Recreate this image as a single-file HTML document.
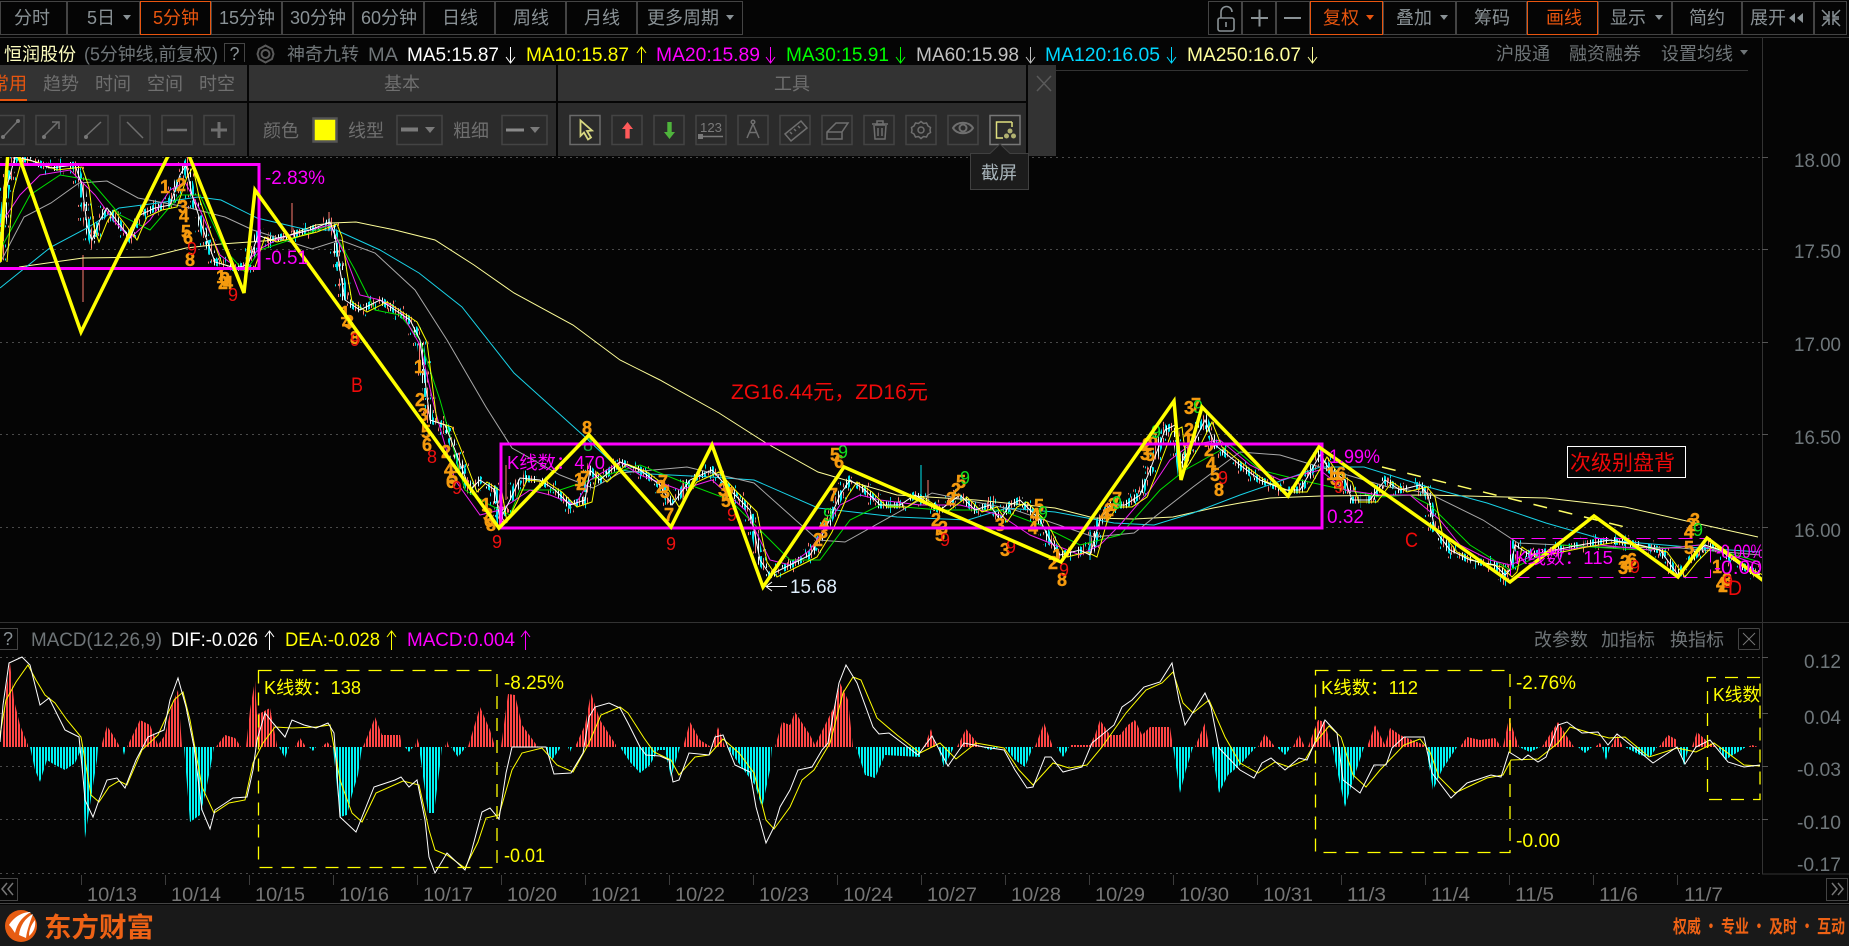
<!DOCTYPE html>
<html lang="zh"><head><meta charset="utf-8"><title>恒润股份</title>
<style>
html,body{margin:0;padding:0;background:#050505;width:1849px;height:946px;overflow:hidden}
svg{display:block}
text{font-family:"Liberation Sans","Noto Sans CJK SC",sans-serif;white-space:pre}
.c{font-family:"Liberation Sans","Noto Sans CJK SC",sans-serif;font-size:18px}
.m{text-anchor:middle}
.g{fill:#8a9296}.d{fill:#6f7578}.p{fill:#707070}
.ax{font-size:19px;fill:#6f777b;text-anchor:end}
.dt{font-size:19px;fill:#767676}
.td{font-size:18px;fill:#f59a0e;font-weight:700;stroke:#f59a0e;stroke-width:.4}.r9{font-size:18px;fill:#f01010}.g9{font-size:18px;fill:#10e020}
.dot{stroke:#4a4a4a;stroke-width:1;stroke-dasharray:2 4;fill:none}
.b{fill:none;stroke:#444}.o{fill:none;stroke:#e8550f}
.ib{fill:none;stroke:#444;stroke-width:1.5}
.ic{fill:none;stroke:#6f6f6f;stroke-width:1.5}
polyline{fill:none}
</style></head><body>
<svg xmlns="http://www.w3.org/2000/svg" width="1849" height="946" viewBox="0 0 1849 946">
<defs>
<pattern id="rd" width="3" height="10" patternUnits="userSpaceOnUse"><rect width="2" height="10" fill="#ff4545"/></pattern>
<pattern id="cy" width="3" height="10" patternUnits="userSpaceOnUse"><rect width="2" height="10" fill="#00f2f2"/></pattern>
<pattern id="cd" width="8" height="10" patternUnits="userSpaceOnUse"><rect width="2" height="10" fill="#00e8ee"/><rect x="3" width="1" height="10" fill="#ff7a70"/><rect x="6" width="1" height="10" fill="#e8ffff"/></pattern>
<pattern id="ce" width="5" height="10" patternUnits="userSpaceOnUse"><rect width="1" height="10" fill="#00e8ee"/><rect x="3" width="1" height="10" fill="#ff7a70"/></pattern>
<clipPath id="cm"><rect x="0" y="157" width="1762" height="465"/></clipPath>
<clipPath id="cb"><rect x="0" y="650" width="1761" height="224"/></clipPath>
<polyline id="px" points="0,260 6,190 15,157 30,160 50,168 75,165 82,185 87,225 92,240 100,220 107,208 120,225 130,238 140,215 155,208 170,205 180,175 186,165 192,195 205,235 215,262 235,268 248,265 258,235 270,240 290,235 310,230 330,222 335,235 340,270 345,300 360,310 380,300 395,310 410,320 420,340 425,380 430,420 445,425 455,450 470,490 480,480 495,490 500,520 510,500 520,478 540,480 555,490 570,505 585,500 590,470 600,480 620,462 640,470 660,485 672,505 690,480 712,470 730,490 750,510 760,560 770,575 790,565 810,555 825,530 840,495 850,480 865,490 880,505 900,505 915,495 940,510 960,495 975,510 990,505 1000,520 1010,505 1020,500 1040,520 1050,540 1060,555 1080,550 1090,555 1100,520 1110,505 1125,505 1140,495 1150,470 1165,430 1175,425 1180,465 1195,440 1205,420 1215,445 1240,465 1260,480 1285,490 1300,490 1320,455 1330,470 1345,480 1352,500 1370,500 1385,480 1400,490 1420,485 1428,495 1435,530 1450,550 1470,560 1495,565 1505,575 1510,570 1515,545 1530,555 1580,545 1610,540 1640,545 1660,550 1678,575 1690,560 1705,545 1720,550 1740,565 1760,575"/>
</defs>
<rect width="1849" height="946" fill="#050505"/>

<!-- top toolbar -->
<g stroke-width="1">
<rect class="b" x="0.5" y="1.5" width="66" height="33"/><rect class="b" x="67.5" y="1.5" width="72" height="33"/>
<rect class="b" x="211.5" y="1.5" width="70" height="33"/><rect class="b" x="282.5" y="1.5" width="70" height="33"/><rect class="b" x="353.5" y="1.5" width="70" height="33"/><rect class="b" x="424.5" y="1.5" width="70" height="33"/><rect class="b" x="495.5" y="1.5" width="70" height="33"/><rect class="b" x="566.5" y="1.5" width="70" height="33"/><rect class="b" x="637.5" y="1.5" width="105" height="33"/>
<rect class="o" x="140.5" y="1.5" width="70" height="33"/>
<rect class="b" x="1208.5" y="1.5" width="33" height="33"/><rect class="b" x="1242.5" y="1.5" width="33" height="33"/><rect class="b" x="1276.5" y="1.5" width="33" height="33"/>
<rect class="b" x="1383.5" y="1.5" width="72" height="33"/><rect class="b" x="1456.5" y="1.5" width="70" height="33"/><rect class="b" x="1598.5" y="1.5" width="73" height="33"/><rect class="b" x="1672.5" y="1.5" width="69" height="33"/><rect class="b" x="1742.5" y="1.5" width="71" height="33"/><rect class="b" x="1814.5" y="1.5" width="32" height="33"/>
<rect class="o" x="1310.5" y="1.5" width="72" height="33"/><rect class="o" x="1527.5" y="1.5" width="70" height="33"/>
</g>
<g class="c m g">
<text x="32" y="24" class="m">分时</text><text x="101" y="24" class="m">5日</text>
<text x="176" y="24" class="m" style="fill:#e8550f">5分钟</text>
<text x="247" y="24" class="m">15分钟</text><text x="318" y="24" class="m">30分钟</text><text x="389" y="24" class="m">60分钟</text>
<text x="460" y="24" class="m">日线</text><text x="531" y="24" class="m">周线</text><text x="602" y="24" class="m">月线</text><text x="683" y="24" class="m">更多周期</text>
<text x="1341" y="24" class="m" style="fill:#e8550f">复权</text><text x="1414" y="24" class="m">叠加</text><text x="1492" y="24" class="m">筹码</text>
<text x="1564" y="24" class="m" style="fill:#e8550f">画线</text><text x="1628" y="24" class="m">显示</text><text x="1707" y="24" class="m">简约</text><text x="1768" y="24" class="m">展开</text>
</g>
<g fill="#8a9296">
<path d="M123 15h8l-4 5zM726 15h8l-4 5zM1440 15h8l-4 5zM1655 15h8l-4 5z"/>
<path d="M1366 15h8l-4 5z" fill="#e8550f"/>
<path d="M1795 13v10l-6-5zM1803 13v10l-6-5z"/>
</g>
<g fill="none" stroke="#8a9296" stroke-width="1.6">
<rect x="1218" y="18" width="16" height="13" rx="2"/><path d="M1221 18v-6a5.500 5.500 0 0 1 11 0"/><path d="M1226 22v5"/>
</g>
<path d="M1251 18h17M1259.500 9.500v17" stroke="#8a9296" stroke-width="2"/><path d="M1284 18h17" stroke="#8a9296" stroke-width="2"/>
<path d="M1829 11v6h-6M1833 11v6h6M1829 25v-6h-6M1833 25v-6h6M1822 10l6 6M1840 10l-6 6M1822 26l6-6M1840 26l-6-6" stroke="#8a9296" fill="none" stroke-width="1.500"/>
<path d="M0 37.500H1849" stroke="#333"/>

<!-- info row -->
<text x="4" y="60.500" class="c" style="fill:#ffffc0">恒润股份</text>
<text x="84" y="60.500" class="c d" textLength="134" lengthAdjust="spacingAndGlyphs">(5分钟线,前复权)</text>
<path d="M224.500 62V43.500h20V62" class="b"/><text x="234.500" y="60" class="c m g" style="text-anchor:middle">?</text>
<g fill="none" stroke="#5a5a5a"><circle cx="265.500" cy="54" r="4" stroke-width="2"/><path d="M265.500 45.500l6.500 3.500 1.500 5-1.500 5-6.500 3.500-6.500-3.500-1.500-5 1.500-5z" stroke-width="2"/></g>
<text x="287" y="60.500" class="c d">神奇九转</text>
<text x="368" y="61" style="font-size:19px" class="d" textLength="30" lengthAdjust="spacingAndGlyphs">MA</text>
<g style="font-size:19px">
<text x="407" y="61" fill="#fff" textLength="92" lengthAdjust="spacingAndGlyphs">MA5:15.87</text>
<text x="526" y="61" fill="#ff0" textLength="103" lengthAdjust="spacingAndGlyphs">MA10:15.87</text>
<text x="656" y="61" fill="#f0f" textLength="104" lengthAdjust="spacingAndGlyphs">MA20:15.89</text>
<text x="786" y="61" fill="#0f0" textLength="103" lengthAdjust="spacingAndGlyphs">MA30:15.91</text>
<text x="916" y="61" fill="#c0c0c0" textLength="103" lengthAdjust="spacingAndGlyphs">MA60:15.98</text>
<text x="1045" y="61" fill="#00d8ff" textLength="115" lengthAdjust="spacingAndGlyphs">MA120:16.05</text>
<text x="1187" y="61" fill="#ffff9c" textLength="114" lengthAdjust="spacingAndGlyphs">MA250:16.07</text>
</g>
<g fill="none" stroke-width="1">
<path d="M510.500 47v16M506 57l4.500 6 4.500-6" stroke="#fff"/>
<path d="M641.500 63V47M637 53l4.500-6 4.500 6" stroke="#ff0"/>
<path d="M770.500 47v16M766 57l4.500 6 4.500-6" stroke="#f0f"/>
<path d="M900.500 47v16M896 57l4.500 6 4.500-6" stroke="#0f0"/>
<path d="M1030.500 47v16M1026 57l4.500 6 4.500-6" stroke="#c0c0c0"/>
<path d="M1171.500 47v16M1167 57l4.500 6 4.500-6" stroke="#00d8ff"/>
<path d="M1312.500 47v16M1308 57l4.500 6 4.500-6" stroke="#ffff9c"/>
</g>
<text x="1496" y="60" class="c d">沪股通</text><text x="1569" y="60" class="c d">融资融券</text><text x="1661" y="60" class="c d">设置均线</text>
<path d="M1740 50h8l-4 5z" fill="#6f7578"/>
<path d="M1056 70.500H1748" stroke="#333"/>

<!-- axis + grid -->
<path d="M1762.500 38V874H1849M0 622.500H1849" stroke="#333" fill="none"/>
<g class="dot">
<path d="M0 157.500H1762M0 249.500H1762M0 342.500H1762M0 434.500H1762M0 527.500H1762"/>
<path d="M0 657.500H1760M0 713.500H1760M0 766.500H1760M0 819.500H1760M0 873.500H1760"/>
</g>
<path d="M1762 157.500h6M1762 249.500h6M1762 342.500h6M1762 434.500h6M1762 527.500h6M1762 657.500h6M1762 713.500h6M1762 766.500h6M1762 819.500h6" stroke="#555"/>
<g class="ax">
<text x="1841" y="167" class="ax" textLength="47" lengthAdjust="spacingAndGlyphs">18.00</text>
<text x="1841" y="258" class="ax" textLength="47" lengthAdjust="spacingAndGlyphs">17.50</text>
<text x="1841" y="351" class="ax" textLength="47" lengthAdjust="spacingAndGlyphs">17.00</text>
<text x="1841" y="444" class="ax" textLength="47" lengthAdjust="spacingAndGlyphs">16.50</text>
<text x="1841" y="537" class="ax" textLength="47" lengthAdjust="spacingAndGlyphs">16.00</text>
<text x="1841" y="668" class="ax" textLength="37" lengthAdjust="spacingAndGlyphs">0.12</text>
<text x="1841" y="724" class="ax" textLength="37" lengthAdjust="spacingAndGlyphs">0.04</text>
<text x="1841" y="776" class="ax" textLength="44" lengthAdjust="spacingAndGlyphs">-0.03</text>
<text x="1841" y="829" class="ax" textLength="44" lengthAdjust="spacingAndGlyphs">-0.10</text>
<text x="1841" y="871" class="ax" textLength="44" lengthAdjust="spacingAndGlyphs">-0.17</text>
</g>

<!-- main chart -->
<g clip-path="url(#cm)">
<!-- candles -->
<use href="#px" stroke="url(#ce)" stroke-width="16" stroke-dasharray="2 11 3 17 2 8 3 23"/>
<use href="#px" stroke="url(#cd)" stroke-width="7" stroke-dasharray="14 5 9 8 22 4"/>
<path d="M83 255V302M292 203V232M329 212V225M506 465V500M928 480V505M683 480V505" stroke="#ff7a70" stroke-width="1"/>
<path d="M921 465V505M1090 530V560M26 300" stroke="#00e8ee" stroke-width="1"/>
<!-- MA250 -->
<polyline stroke="#ffff99" stroke-width="1" points="19,267 83,258 150,257 186,248 221,244 277,240 316,225 332,223 356,222 395,230 435,240 474,265 514,293 573,325 620,360 660,380 719,413 766,443 818,472 897,495 976,500 1055,508 1094,518 1134,519 1173,517 1213,508 1240,503 1270,498 1321,496 1428,495 1546,498 1625,507 1704,525 1758,537"/>
<path d="M1382 467L1625 527" stroke="#ffff66" stroke-width="1.500" stroke-dasharray="14 12" fill="none"/>
<!-- MA120 -->
<polyline stroke="#19d3e8" stroke-width="1" points="0,288 51,247 87,228 119,208 158,203 198,197 221,200 257,218 308,230 336,230 380,250 419,273 462,307 514,373 585,437 620,470 650,474 711,477 754,480 818,508 897,517 968,520 1007,508 1055,512 1114,523 1154,525 1193,513 1240,495 1289,478 1320,467 1364,467 1428,487 1487,503 1546,523 1605,540 1700,548 1760,552"/>
<!-- MA60 -->
<polyline stroke="#a8a8a8" stroke-width="1" points="0,263 24,217 51,203 79,183 107,181 138,198 186,207 225,217 253,230 312,249 340,240 375,253 415,290 447,340 486,407 512,448 560,475 593,488 620,473 687,467 754,483 818,540 845,542 897,513 932,493 1015,510 1094,537 1134,533 1193,487 1240,452 1280,455 1320,467 1388,487 1428,493 1483,520 1518,543 1600,547 1680,548 1760,555"/>
<!-- MA30 -->
<polyline stroke="#00e000" stroke-width="1" points="0,250 30,195 60,175 90,180 120,215 150,230 180,195 200,195 225,250 245,272 260,250 290,240 330,225 355,270 375,310 400,315 420,340 440,400 465,490 490,505 510,515 520,490 560,490 590,480 640,465 690,485 730,500 770,540 790,560 820,560 850,520 880,505 940,510 1000,510 1040,525 1080,545 1120,535 1160,490 1185,470 1230,445 1260,470 1300,480 1345,490 1380,497 1410,495 1430,505 1470,545 1510,570 1560,545 1640,550 1700,545 1760,562"/>
<!-- MA20 -->
<polyline stroke="#f020f0" stroke-width="1" points="0,225 20,195 40,175 70,170 95,195 115,222 130,238 150,220 170,190 185,182 200,210 220,255 240,270 258,250 280,238 310,230 330,225 345,255 360,295 380,300 400,310 420,345 435,410 455,480 480,515 500,510 530,490 550,495 575,505 590,480 620,462 640,475 680,490 712,480 745,510 770,560 790,565 810,550 840,505 860,495 880,500 920,505 960,505 1000,515 1030,535 1055,545 1080,555 1100,545 1120,525 1150,490 1170,460 1190,445 1220,440 1250,465 1280,480 1320,470 1345,490 1380,495 1410,495 1440,520 1460,545 1490,560 1510,565 1540,553 1600,545 1650,550 1700,545 1760,565"/>
<!-- MA10 -->
<use href="#px" stroke="#ffff00" stroke-width="1" transform="translate(7,2)"/>
<!-- MA5 -->
<use href="#px" stroke="#fff" stroke-width="1"/>

<!-- TD digits -->
<g>
<text class="td" x="160" y="193">1</text><text class="td" x="176" y="191">2</text><text class="td" x="178" y="213">3</text><text class="td" x="179" y="222">4</text><text class="td" x="181" y="238">5</text><text class="td" x="183" y="244">6</text><text class="td" x="185" y="266">8</text>
<text class="td" x="216" y="283">1</text><text class="td" x="218" y="289">2</text><text class="td" x="223" y="289">4</text><text class="td" x="220" y="285">3</text>
<text class="td" x="340" y="319">1</text><text class="td" x="344" y="328">3</text><text class="td" x="342" y="329">4</text><text class="td" x="350" y="344">8</text>
<text class="td" x="414" y="373">1</text><text class="td" x="415" y="406">2</text><text class="td" x="418" y="421">3</text><text class="td" x="421" y="438">5</text><text class="td" x="422" y="451">6</text>
<text class="td" x="441" y="458">2</text><text class="td" x="444" y="476">4</text><text class="td" x="446" y="488">6</text><text class="td" x="448" y="484">5</text>
<text class="td" x="481" y="511">1</text><text class="td" x="483" y="521">3</text><text class="td" x="486" y="531">8</text><text class="td" x="484" y="527">6</text>
<text class="td" x="582" y="434">8</text>
<text class="td" x="574" y="486">1</text><text class="td" x="576" y="490">2</text><text class="td" x="580" y="484">7</text>
<text class="td" x="656" y="493">2</text><text class="td" x="660" y="498">3</text><text class="td" x="658" y="488">7</text><text class="td" x="664" y="521">7</text>
<text class="td" x="718" y="496">3</text><text class="td" x="721" y="507">5</text><text class="td" x="724" y="500">2</text>
<text class="td" x="830" y="461">5</text><text class="td" x="834" y="468">6</text><text class="td" x="828" y="501">7</text><text class="td" x="819" y="531">4</text><text class="td" x="813" y="546">2</text><text class="td" x="818" y="538">3</text>
<text class="td" x="951" y="496">2</text><text class="td" x="956" y="488">5</text><text class="td" x="946" y="505">2</text><text class="td" x="931" y="526">2</text><text class="td" x="935" y="541">5</text><text class="td" x="938" y="534">3</text>
<text class="td" x="995" y="531">3</text><text class="td" x="1000" y="556">3</text><text class="td" x="1030" y="521">4</text><text class="td" x="1034" y="512">5</text><text class="td" x="1028" y="534">4</text>
<text class="td" x="1048" y="569">2</text><text class="td" x="1057" y="586">8</text><text class="td" x="1052" y="562">1</text>
<text class="td" x="1104" y="516">2</text><text class="td" x="1108" y="511">3</text><text class="td" x="1112" y="505">7</text><text class="td" x="1100" y="521">4</text>
<text class="td" x="1142" y="451">2</text><text class="td" x="1145" y="461">5</text><text class="td" x="1148" y="445">6</text><text class="td" x="1140" y="460">3</text>
<text class="td" x="1184" y="414">3</text><text class="td" x="1191" y="411">7</text><text class="td" x="1184" y="436">2</text><text class="td" x="1183" y="446">1</text>
<text class="td" x="1204" y="456">2</text><text class="td" x="1210" y="481">5</text><text class="td" x="1214" y="496">8</text><text class="td" x="1206" y="470">4</text>
<text class="td" x="1326" y="480">1</text><text class="td" x="1330" y="485">3</text><text class="td" x="1334" y="491">4</text><text class="td" x="1336" y="480">6</text>
<text class="td" x="1620" y="568">2</text><text class="td" x="1623" y="572">4</text><text class="td" x="1618" y="574">3</text><text class="td" x="1627" y="566">6</text>
<text class="td" x="1686" y="531">2</text><text class="td" x="1690" y="526">3</text><text class="td" x="1684" y="538">4</text><text class="td" x="1684" y="554">5</text>
<text class="td" x="1718" y="592">2</text><text class="td" x="1722" y="586">3</text><text class="td" x="1716" y="590">4</text><text class="td" x="1712" y="573">1</text>
</g>
<text class="r9" x="187" y="255">9</text><text class="r9" x="228" y="301">9</text><text class="r9" x="350" y="346">9</text><text class="r9" x="427" y="463">8</text><text class="r9" x="452" y="494">9</text><text class="r9" x="492" y="548">9</text>
<text class="r9" x="666" y="550">9</text><text class="r9" x="727" y="521">9</text><text class="r9" x="940" y="546">9</text><text class="r9" x="1006" y="553">9</text><text class="r9" x="1059" y="576">9</text><text class="r9" x="1218" y="484">9</text><text class="r9" x="1334" y="493">9</text><text class="r9" x="1630" y="573">9</text><text class="r9" x="1723" y="588">9</text>
<text class="g9" x="583" y="451" style="fill:#18b040">8</text><text class="g9" x="838" y="458">9</text><text class="g9" x="823" y="521">9</text><text class="g9" x="960" y="484">9</text><text class="g9" x="1038" y="519">9</text><text class="g9" x="1112" y="509">9</text><text class="g9" x="1151" y="438">9</text><text class="g9" x="1193" y="413">9</text><text class="g9" x="1693" y="536">9</text>

<!-- boxes -->
<rect x="-4" y="164.500" width="263" height="104" fill="none" stroke="#f0f" stroke-width="3"/>
<rect x="501" y="444" width="821" height="84" fill="none" stroke="#f0f" stroke-width="3"/>
<rect x="1510.500" y="538.500" width="200" height="39" fill="none" stroke="#f0f" stroke-width="1" stroke-dasharray="14 7"/>
<!-- zigzag -->
<polyline stroke="#ffff00" stroke-width="3.500" stroke-linejoin="miter" points="0,262 8,152 16,148 81,332 172,148 186,148 244,293 255,190 499,528 589,435 671,527 712,445 763,587 844,467 1061,562 1174,401 1181,480 1202,407 1288,496 1319,447 1510,582 1594,516 1678,577 1707,538 1765,582"/>
<!-- labels -->
<g fill="#f0f" font-size="19">
<text x="265" y="184" textLength="60" lengthAdjust="spacingAndGlyphs">-2.83%</text>
<text x="265" y="264" textLength="43" lengthAdjust="spacingAndGlyphs">-0.51</text>
<text x="507" y="469" class="c" style="fill:#f0f" textLength="98" lengthAdjust="spacingAndGlyphs">K线数：470</text>
<text x="1329" y="463" textLength="51" lengthAdjust="spacingAndGlyphs">1.99%</text>
<text x="1327" y="523" textLength="37" lengthAdjust="spacingAndGlyphs">0.32</text>
<text x="1515" y="564" class="c" style="fill:#f0f" textLength="98" lengthAdjust="spacingAndGlyphs">K线数：115</text>
<text x="1716" y="558" textLength="48" lengthAdjust="spacingAndGlyphs">-0.00%</text>
<text x="1714" y="574" textLength="48" lengthAdjust="spacingAndGlyphs">-0.00</text>
</g>
<g fill="#f00a0a" font-size="21">
<text x="351" y="392" textLength="12" lengthAdjust="spacingAndGlyphs">B</text>
<text x="1405" y="547" textLength="13" lengthAdjust="spacingAndGlyphs">C</text>
<text x="1728" y="595" textLength="14" lengthAdjust="spacingAndGlyphs">D</text>
<text x="731" y="399" fill="#f00a0a" style="font-size:21px" textLength="197" lengthAdjust="spacingAndGlyphs">ZG16.44元，ZD16元</text>
</g>
<rect x="1567.500" y="446.500" width="118" height="31" fill="none" stroke="#fff"/>
<text x="1570" y="470" fill="#f00a0a" style="font-size:21px" textLength="105" lengthAdjust="spacingAndGlyphs">次级别盘背</text>
<path d="M787 586.500H767M772 582l-6 4.500 6 4.500" stroke="#fff" stroke-width="1" fill="none"/>
<text x="790" y="593" font-size="19" fill="#e0f0ff" textLength="47" lengthAdjust="spacingAndGlyphs">15.68</text>
</g>

<!-- MACD header -->
<path d="M0 628.500h17.500v21H0" class="b"/><text x="8" y="645" class="c m g" style="text-anchor:middle">?</text>
<g font-size="19">
<text x="31" y="646" class="d" textLength="131" lengthAdjust="spacingAndGlyphs">MACD(12,26,9)</text>
<text x="171" y="646" fill="#fff" textLength="87" lengthAdjust="spacingAndGlyphs">DIF:-0.026</text>
<text x="285" y="646" fill="#ff0" textLength="95" lengthAdjust="spacingAndGlyphs">DEA:-0.028</text>
<text x="407" y="646" fill="#f0f" textLength="108" lengthAdjust="spacingAndGlyphs">MACD:0.004</text>
</g>
<g fill="none" stroke-width="1">
<path d="M269.500 650V631M265 637l4.500-6 4.500 6" stroke="#fff"/>
<path d="M391.500 650V631M387 637l4.500-6 4.500 6" stroke="#ff0"/>
<path d="M525.500 650V631M521 637l4.500-6 4.500 6" stroke="#f0f"/>
</g>
<text x="1534" y="646" class="c d">改参数</text><text x="1601" y="646" class="c d">加指标</text><text x="1670" y="646" class="c d">换指标</text>
<rect x="1738.500" y="628.500" width="21" height="21" rx="1" class="b" stroke="#555"/><path d="M1743 633l12 12M1755 633l-12 12" stroke="#777"/>

<!-- MACD histogram -->
<g clip-path="url(#cb)">
<path fill="url(#rd)" d="M2 747L6 690 10 663 14 700 20 725 28 745V747ZM101 747L107 726 113 735 120 747ZM127 747L140 720 150 725 158 745 165 735 172 705 178 690 182 747ZM216 747L225 735 235 738 241 747ZM246 747L250 710 255 680 257 715 270 708 277 745V747ZM295 747L300 738 306 747ZM322 747L327 742 332 747ZM363 747L372 725 375 717 382 735 400 735 402 747ZM415 747L417 738 420 747ZM445 747L447 741 449 747ZM468 747L480 707 490 730 495 747ZM501 747L508 694 515 695 522 725 538 747ZM575 747L585 725 591 693 600 720 616 745V747ZM683 747L690 722 700 740 711 747ZM712 747L718 727 725 747ZM775 747L782 722 790 725 795 712 810 735 815 745 825 725 835 705 840 683 848 700 853 747ZM924 747L931 729 936 747ZM957 747L966 729 975 740 980 747ZM1035 747L1044 723 1053 747ZM1070 747V745L1090 745 1095 735 1100 720 1110 735 1120 735 1128 725 1135 720 1142 735 1150 727 1170 727 1173 747ZM1195 747L1205 723 1209 747ZM1258 747L1265 734 1275 747ZM1293 747L1299 735 1305 747ZM1308 747L1318 720 1325 722 1331 747ZM1367 747L1375 725 1385 745 1390 728 1400 735 1424 745V747ZM1460 747L1467 737 1480 740 1495 738 1501 747ZM1503 747L1509 718 1519 747ZM1542 747L1558 722 1566 735 1574 747ZM1595 747L1600 743 1602 747ZM1611 747L1617 735 1623 747ZM1659 747L1668 735 1677 740V747ZM1692 747L1697 732 1708 742 1716 747ZM1748 747L1752 745 1758 747Z"/>
<path fill="url(#cy)" d="M30 747L35 770 40 782 47 760 55 765 65 770 75 763 81 750 83 780 85 838 90 805 97 760 98 747ZM122 747L124 755 126 747ZM184 747L190 822 200 815 205 795 210 770 214 747ZM279 747L285 758 289 747ZM309 747L313 751 316 747ZM333 747L340 817 347 815 352 795 358 775 362 747ZM405 747L409 752 413 747ZM419 747L428 813 434 813 440 765 442 747ZM451 747L458 757 466 747ZM545 747L552 760 561 747ZM568 747L570 752 572 747ZM620 747L630 762 640 773 650 765 658 750 665 750 671 777 680 747ZM727 747L740 765 755 785 762 808 770 770 772 747ZM856 747L865 775 875 778 885 755 920 757V747ZM938 747L944 767 954 747ZM982 747L990 750 1000 747ZM1005 747L1015 760 1025 767 1033 747ZM1057 747L1063 757 1069 747ZM1173 747L1180 793 1186 770 1193 747ZM1211 747L1219 793 1228 775 1240 765 1256 747ZM1277 747L1285 755 1291 747ZM1332 747L1345 807 1350 790 1364 747ZM1426 747L1433 790 1442 770 1457 747ZM1519 747L1530 752 1540 747ZM1578 747L1585 753 1592 747ZM1602 747L1606 760 1610 747ZM1625 747L1640 755 1650 757 1657 747ZM1679 747L1684 765 1689 747ZM1718 747L1725 760 1746 747Z"/>
<!-- DEA -->
<polyline stroke="#ffff00" stroke-width="1" points="0,735 6,700 16,682 28,665 36,680 45,695 55,703 67,720 81,737 91,795 99,802 109,787 119,781 127,785 142,750 158,735 174,700 183,692 190,720 202,787 214,813 229,803 245,800 253,763 263,743 275,727 292,728 316,727 330,725 340,780 352,813 362,822 376,793 403,781 419,785 429,830 435,850 447,855 465,868 478,842 486,818 499,815 512,770 522,753 542,748 557,765 573,772 589,743 601,715 620,707 628,713 644,738 654,752 671,760 679,775 695,757 709,755 723,739 739,753 754,773 766,820 774,829 790,807 802,780 814,770 830,743 843,693 853,677 861,680 877,718 897,735 920,753 940,743 956,759 976,743 1004,748 1019,770 1033,785 1053,763 1069,768 1087,765 1102,747 1126,713 1146,690 1162,683 1173,672 1183,703 1193,713 1209,700 1225,737 1240,763 1258,773 1275,762 1289,767 1305,760 1315,743 1329,726 1341,737 1353,775 1366,787 1380,770 1404,745 1420,739 1430,752 1439,777 1455,793 1487,778 1503,775 1511,760 1538,759 1558,743 1570,727 1594,734 1609,738 1625,737 1649,757 1677,748 1696,752 1714,743 1744,765 1760,766"/>
<!-- DIF -->
<polyline stroke="#ffffff" stroke-width="1" points="0,742 3,705 9,663 22,657 30,665 40,705 49,698 65,730 79,737 83,777 85,800 93,817 99,800 107,780 117,778 125,788 136,760 148,737 164,730 170,700 178,678 186,707 194,747 202,810 210,829 215,810 233,798 247,797 253,770 257,740 265,713 273,723 285,737 292,720 304,725 316,728 328,723 334,733 340,817 356,832 366,807 374,787 395,780 401,777 409,787 417,780 425,820 429,857 435,873 447,853 465,870 471,853 482,812 490,808 499,819 506,773 512,747 530,747 546,747 554,774 571,773 583,753 589,717 595,707 609,703 620,708 628,723 640,747 646,755 660,756 669,760 673,782 679,780 689,753 709,755 715,737 723,735 735,765 750,772 756,807 766,843 774,827 780,807 790,790 798,770 812,767 822,750 828,743 839,683 846,665 857,683 873,727 879,734 889,733 905,745 918,755 932,736 948,766 964,743 984,747 1004,750 1015,770 1027,788 1033,787 1045,757 1051,757 1063,772 1082,767 1092,743 1114,725 1122,707 1132,700 1144,687 1160,682 1172,663 1179,700 1185,725 1205,693 1211,707 1219,748 1240,770 1254,778 1262,763 1271,758 1285,770 1299,758 1307,760 1325,720 1337,733 1343,780 1360,793 1374,765 1386,765 1392,748 1404,737 1424,737 1432,773 1451,798 1467,783 1491,775 1501,777 1509,752 1522,760 1528,755 1538,762 1546,757 1558,725 1567,722 1582,733 1598,732 1608,745 1617,734 1641,753 1653,763 1677,747 1685,764 1696,747 1710,740 1728,762 1744,767 1760,765"/>
</g>
<!-- MACD boxes -->
<g fill="none" stroke="#ffff00" stroke-width="1.300" stroke-dasharray="13 9">
<rect x="258.500" y="670.500" width="238.500" height="197"/>
<rect x="1315.500" y="670.500" width="194.500" height="182"/>
<path d="M1760 677.500H1707.500V799.500H1760V677.500"/>
</g>
<g fill="#ffff00">
<text x="264" y="694" class="c" style="fill:#ffff00" textLength="97" lengthAdjust="spacingAndGlyphs">K线数：138</text>
<text x="1321" y="694" class="c" style="fill:#ffff00" textLength="97" lengthAdjust="spacingAndGlyphs">K线数：112</text>
<text x="1713" y="701" class="c" style="fill:#ffff00" textLength="47" lengthAdjust="spacingAndGlyphs">K线数</text>
<g font-size="19">
<text x="504" y="689" textLength="60" lengthAdjust="spacingAndGlyphs">-8.25%</text>
<text x="504" y="862" textLength="41" lengthAdjust="spacingAndGlyphs">-0.01</text>
<text x="1516" y="689" textLength="60" lengthAdjust="spacingAndGlyphs">-2.76%</text>
<text x="1516" y="847" textLength="44" lengthAdjust="spacingAndGlyphs">-0.00</text>
</g>
</g>

<!-- dates -->
<path d="M81.500 875v10M165.500 875v10M249.500 875v10M333.500 875v10M417.500 875v10M501.500 875v10M585.500 875v10M669.500 875v10M753.500 875v10M837.500 875v10M921.500 875v10M1005.500 875v10M1089.500 875v10M1173.500 875v10M1257.500 875v10M1341.500 875v10M1425.500 875v10M1509.500 875v10M1593.500 875v10M1677.500 875v10" stroke="#3d3d3d"/>
<g class="dt">
<text class="dt" x="87" y="901" textLength="50" lengthAdjust="spacingAndGlyphs">10/13</text><text class="dt" x="171" y="901" textLength="50" lengthAdjust="spacingAndGlyphs">10/14</text><text class="dt" x="255" y="901" textLength="50" lengthAdjust="spacingAndGlyphs">10/15</text><text class="dt" x="339" y="901" textLength="50" lengthAdjust="spacingAndGlyphs">10/16</text><text class="dt" x="423" y="901" textLength="50" lengthAdjust="spacingAndGlyphs">10/17</text><text class="dt" x="507" y="901" textLength="50" lengthAdjust="spacingAndGlyphs">10/20</text><text class="dt" x="591" y="901" textLength="50" lengthAdjust="spacingAndGlyphs">10/21</text><text class="dt" x="675" y="901" textLength="50" lengthAdjust="spacingAndGlyphs">10/22</text><text class="dt" x="759" y="901" textLength="50" lengthAdjust="spacingAndGlyphs">10/23</text><text class="dt" x="843" y="901" textLength="50" lengthAdjust="spacingAndGlyphs">10/24</text><text class="dt" x="927" y="901" textLength="50" lengthAdjust="spacingAndGlyphs">10/27</text><text class="dt" x="1011" y="901" textLength="50" lengthAdjust="spacingAndGlyphs">10/28</text><text class="dt" x="1095" y="901" textLength="50" lengthAdjust="spacingAndGlyphs">10/29</text><text class="dt" x="1179" y="901" textLength="50" lengthAdjust="spacingAndGlyphs">10/30</text><text class="dt" x="1263" y="901" textLength="50" lengthAdjust="spacingAndGlyphs">10/31</text><text class="dt" x="1347" y="901" textLength="39" lengthAdjust="spacingAndGlyphs">11/3</text><text class="dt" x="1431" y="901" textLength="39" lengthAdjust="spacingAndGlyphs">11/4</text><text class="dt" x="1515" y="901" textLength="39" lengthAdjust="spacingAndGlyphs">11/5</text><text class="dt" x="1599" y="901" textLength="39" lengthAdjust="spacingAndGlyphs">11/6</text><text class="dt" x="1684" y="901" textLength="39" lengthAdjust="spacingAndGlyphs">11/7</text>
</g>
<path d="M0 878.500h17.500v22H0" class="b"/><path d="M7 883l-5 6 5 6M13 883l-5 6 5 6" fill="none" stroke="#777" stroke-width="1.500"/>
<rect x="1826.500" y="878.500" width="21" height="22" class="b"/><path d="M1832 883l5 6-5 6M1838 883l5 6-5 6" fill="none" stroke="#777" stroke-width="1.500"/>

<!-- footer -->
<path d="M0 903.500H1849" stroke="#444"/>
<rect x="0" y="905" width="1849" height="41" fill="#191919"/>
<circle cx="21" cy="926" r="16" fill="#e65c12"/>
<path d="M9 925C14 917 22 912 31 912C24 916 18 921 15 933C13 930 11 927 9 925ZM19 935C20 926 25 918 33 914C30 922 27 930 26 938C24 937 21 936 19 935ZM29 936C29 930 31 925 35 920C36 926 34 932 29 936Z" fill="#fff"/>
<text x="44" y="937" font-size="27" font-weight="700" fill="#ee6215" textLength="110" lengthAdjust="spacingAndGlyphs" style="font-family:'Noto Sans CJK SC',sans-serif">东方财富</text>
<text x="1673" y="933" font-size="18" font-weight="700" fill="#ee6215" textLength="172" lengthAdjust="spacingAndGlyphs" style="font-family:'Noto Sans CJK SC',sans-serif">权威 · 专业 · 及时 · 互动</text>

<!-- drawing panel -->
<g fill="#333">
<rect x="0" y="65" width="247" height="36"/><rect x="249" y="65" width="307" height="36"/><rect x="558" y="65" width="468" height="36"/><rect x="1028" y="65" width="28" height="91"/>
</g>
<g fill="#2b2b2b">
<rect x="0" y="103" width="247" height="53"/><rect x="249" y="103" width="307" height="53"/><rect x="558" y="103" width="468" height="53"/>
</g>
<text x="-9" y="90" class="c" style="fill:#e8550f">常用</text><rect x="0" y="99" width="27" height="2" fill="#e8550f"/>
<g class="c p" style="fill:#6f6f6f">
<text x="43" y="90">趋势</text><text x="95" y="90">时间</text><text x="147" y="90">空间</text><text x="199" y="90">时空</text>
<text x="402" y="90" class="m">基本</text><text x="792" y="90" class="m">工具</text>
<text x="263" y="137">颜色</text><text x="348" y="137">线型</text><text x="453" y="137">粗细</text>
</g>
<g class="ib">
<rect x="-6" y="115.500" width="30" height="29"/><rect x="36" y="115.500" width="30" height="29"/><rect x="78" y="115.500" width="30" height="29"/><rect x="120" y="115.500" width="30" height="29"/><rect x="162" y="115.500" width="30" height="29"/><rect x="204" y="115.500" width="30" height="29"/>
<rect x="397" y="115.500" width="45" height="29"/><rect x="502" y="115.500" width="45" height="29"/>
<rect x="612" y="115.500" width="30" height="29"/><rect x="654" y="115.500" width="30" height="29"/><rect x="696" y="115.500" width="30" height="29"/><rect x="738" y="115.500" width="30" height="29"/><rect x="780" y="115.500" width="30" height="29"/><rect x="822" y="115.500" width="30" height="29"/><rect x="864" y="115.500" width="30" height="29"/><rect x="906" y="115.500" width="30" height="29"/><rect x="948" y="115.500" width="30" height="29"/>
</g>
<rect x="570" y="115.500" width="30" height="29" fill="none" stroke="#6a6a6a" stroke-width="1.500"/>
<rect x="990" y="115.500" width="30" height="29" fill="none" stroke="#777" stroke-width="1.500"/>
<!-- icons left -->
<g class="ic">
<path d="M4 136L17 122"/><path d="M44 136L58 122M52 122h7v7"/><path d="M86 136L101 122"/><path d="M127 122L143 138"/><path d="M167 130H187" stroke-width="2.500"/><path d="M219 122v16M211 130h16" stroke-width="3"/>
</g>
<g fill="#777"><circle cx="3" cy="137" r="2"/><circle cx="18" cy="121" r="2"/><circle cx="44" cy="137" r="2"/><circle cx="86" cy="137" r="2"/></g>
<!-- color -->
<rect x="313.500" y="118.500" width="23" height="23" fill="#ffff00" stroke="#555" stroke-width="2.500"/>
<path d="M401 129.500h17" stroke="#7a7a7a" stroke-width="4"/><path d="M425 127h10l-5 6z" fill="#7a7a7a"/>
<path d="M506 130h18" stroke="#8a8a8a" stroke-width="3"/><path d="M530 127h10l-5 6z" fill="#7a7a7a"/>
<!-- tools -->
<path d="M580.500 120.500V136L584 132.500 588 139.500 591 137.500 587 131 592 130.500Z" fill="none" stroke="#d8d880" stroke-width="1.800"/>
<path d="M627.500 122l5.500 7h-3.300v9.500h-4.400v-9.500H622z" fill="#ff5a5a"/>
<path d="M669.500 139l5.500-7h-3.300v-10h-4.400v10H664z" fill="#4fb43c"/>
<text x="711" y="132" font-size="13" fill="#7a7a7a" text-anchor="middle" textLength="22" lengthAdjust="spacingAndGlyphs">123</text>
<path d="M701 136.500h22" stroke="#7a7a7a" stroke-width="1.500"/><rect x="698" y="134" width="5" height="5" fill="#7a7a7a"/>
<g class="ic">
<path d="M753 124l-6 14M753 124l6 14M749.500 132.500h7"/><circle cx="753" cy="122" r="1.800"/>
<path d="M785 134l16-13 6 7-16 13zM790 132l2 2M794 129l2 2M798 126l2 2"/>
<path d="M827 132l9-9h12l-6 9v7h-15zM827 132h15M842 132l6-9"/>
<path d="M875 125h10M872 124h16M877 124v-3h6v3M874 125l1 14h10l1-14M878 128v8M882 128v8"/>
<circle cx="921" cy="130" r="3"/><path d="M921 121.500l2.500 2 3-.5 1.500 3 2.500 1.500-.5 2.500.5 2.500-2.500 1.500-1.500 3-3-.5-2.500 2-2.500-2-3 .5-1.500-3-2.500-1.500.5-2.500-.5-2.500 2.500-1.500 1.500-3 3 .5z"/>
<path d="M953 128c4-7 16-7 20 0c-4 7-16 7-20 0z" stroke-width="2"/><circle cx="963" cy="128" r="3.500" stroke-width="2"/>
</g>
<path d="M1009 122H996.500V138H1003M1012 122V127M1009 122H1012" fill="none" stroke="#e0e080" stroke-width="1.500"/>
<circle cx="1010" cy="131" r="2.500" fill="#b0b070"/><circle cx="1006.500" cy="136" r="2.500" fill="#b0b070"/><circle cx="1013.500" cy="136" r="2.500" fill="#b0b070"/>
<path d="M1037 76l14 15M1051 76l-14 15" stroke="#5a5a5a" stroke-width="1.500"/>
<!-- tooltip -->
<path d="M970.500 153.500H990L1000 144 1010 153.500H1028.500V189.500H970.500Z" fill="#1c1c1c" stroke="#404040"/>
<text x="999" y="179" class="c m" style="text-anchor:middle;fill:#a8b4ba">截屏</text>
</svg>
</body></html>
